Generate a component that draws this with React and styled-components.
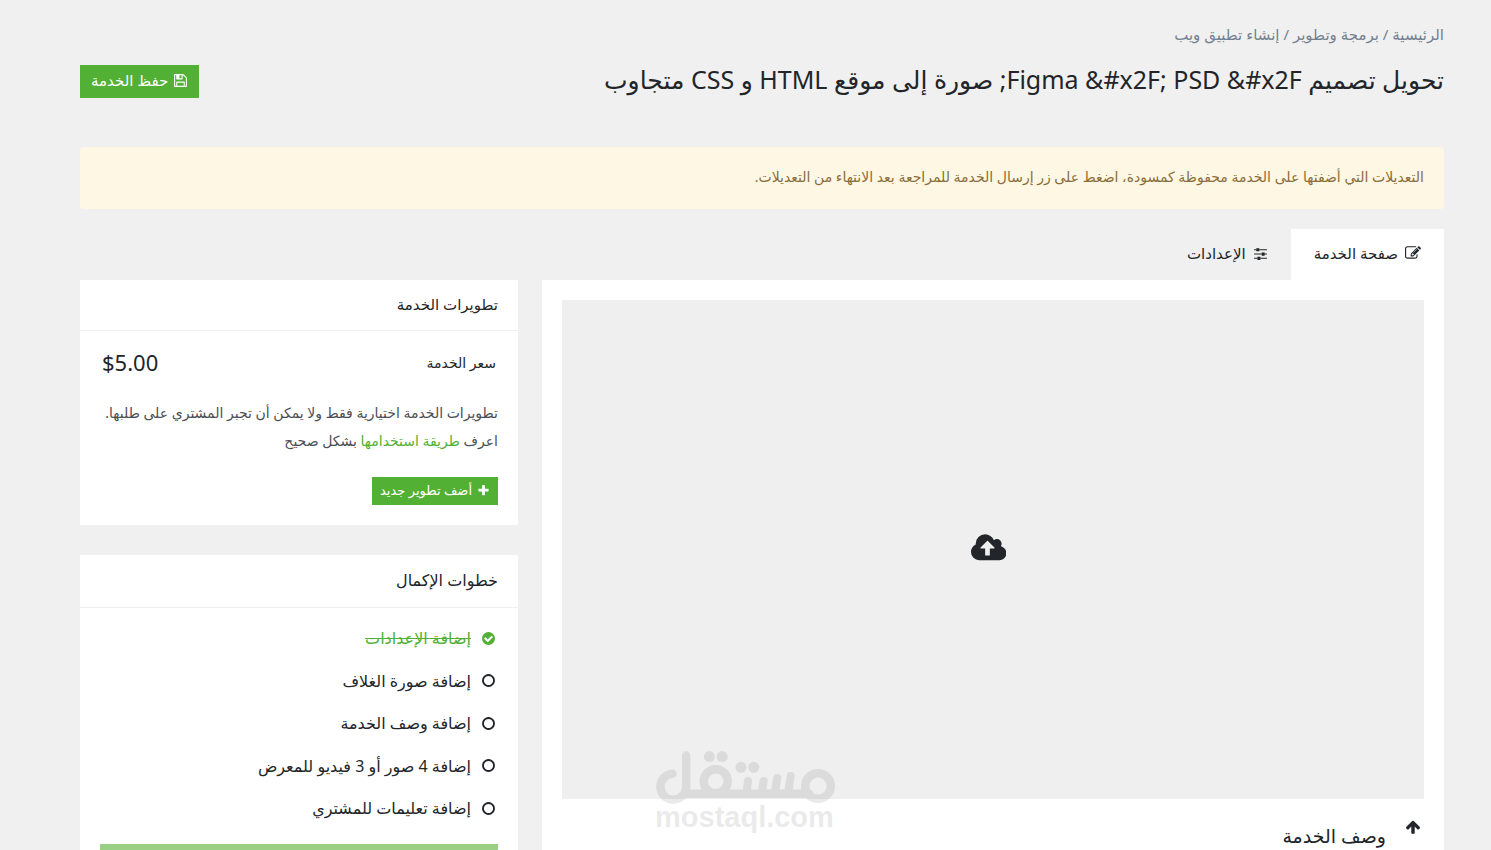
import styled, {createGlobalStyle} from "styled-components";

const icons = {
    save: "M512 1536h768v-384h-768v384zm896 0h128v-896q0-14-10-38.5t-20-34.5l-281-281q-10-10-34-20t-39-10v416q0 40-28 68t-68 28h-576q-40 0-68-28t-28-68v-416h-128v1280h128v-416q0-40 28-68t68-28h832q40 0 68 28t28 68v416zm-384-928v-320q0-13-9.5-22.5t-22.5-9.5h-192q-13 0-22.5 9.5t-9.5 22.5v320q0 13 9.5 22.5t22.5 9.5h192q13 0 22.5-9.5t9.5-22.5zm640 32v928q0 40-28 68t-68 28h-1344q-40 0-68-28t-28-68v-1344q0-40 28-68t68-28h928q40 0 88 20t76 48l280 280q28 28 48 76t20 88z",
    edit: "M888 1184l116-116-152-152-116 116v56h96v96h56zm440-720q-16-16-33 1l-350 350q-17 17-1 33t33-1l350-350q17-17 1-33zm80 594v190q0 119-84.5 203.5t-203.5 84.5h-832q-119 0-203.5-84.5t-84.5-203.5v-832q0-119 84.5-203.5t203.5-84.5h832q63 0 117 25 15 7 18 23 3 17-9 29l-49 49q-14 14-32 8-23-6-45-6h-832q-66 0-113 47t-47 113v832q0 66 47 113t113 47h832q66 0 113-47t47-113v-126q0-13 9-22l64-64q15-15 35-7t20 29zm-96-738l288 288-672 672h-288v-288zm444 132l-92 92-288-288 92-92q28-28 68-28t68 28l152 152q28 28 28 68t-28 68z",
    sliders: "M480 1408v128h-352v-128h352zm352-128q26 0 45 19t19 45v256q0 26-19 45t-45 19h-256q-26 0-45-19t-19-45v-256q0-26 19-45t45-19h256zm160-384v128h-864v-128h864zm-640-512v128h-224v-128h224zm1312 1024v128h-736v-128h736zm-960-1152q26 0 45 19t19 45v256q0 26-19 45t-45 19h-256q-26 0-45-19t-19-45v-256q0-26 19-45t45-19h256zm640 512q26 0 45 19t19 45v256q0 26-19 45t-45 19h-256q-26 0-45-19t-19-45v-256q0-26 19-45t45-19h256zm320 128v128h-224v-128h224zm0-512v128h-864v-128h864z",
    plus: "M1600 736v192q0 40-28 68t-68 28h-416v416q0 40-28 68t-68 28h-192q-40 0-68-28t-28-68v-416h-416q-40 0-68-28t-28-68v-192q0-40 28-68t68-28h416v-416q0-40 28-68t68-28h192q40 0 68 28t28 68v416h416q40 0 68 28t28 68z",
    check: "M1412 734q0-28-18-46l-91-90q-19-19-45-19t-45 19l-408 407-226-226q-19-19-45-19t-45 19l-91 90q-18 18-18 46 0 27 18 45l362 362q19 19 45 19 27 0 46-19l543-543q18-18 18-45zm252 162q0 209-103 385.5t-279.5 279.5-385.5 103-385.5-103-279.5-279.5-103-385.5 103-385.5 279.5-279.5 385.5-103 385.5 103 279.5 279.5 103 385.5z",
    circle: "M896 352q-148 0-273 73t-198 198-73 273 73 273 198 198 273 73 273-73 198-198 73-273-73-273-198-198-273-73zm768 544q0 209-103 385.5t-279.5 279.5-385.5 103-385.5-103-279.5-279.5-103-385.5 103-385.5 279.5-279.5 385.5-103 385.5 103 279.5 279.5 103 385.5z",
    arrowUp: "M1675 971q0 51-37 90l-75 75q-38 38-91 38-54 0-90-38l-294-293v704q0 52-37.5 84.5t-90.5 32.5h-128q-53 0-90.5-32.5t-37.5-84.5v-704l-294 293q-36 38-90 38t-90-38l-75-75q-38-38-38-90 0-53 38-91l651-651q35-37 90-37 54 0 91 37l651 651q37 39 37 91z",
    cloud: "M1280 864q0-14-9-23l-352-352q-9-9-23-9t-23 9l-351 351q-10 12-10 24 0 14 9 23t23 9h224v352q0 13 9.5 22.5t22.5 9.5h192q13 0 22.5-9.5t9.5-22.5v-352h224q13 0 22.5-9.5t9.5-22.5zm640 288q0 159-112.5 271.5t-271.5 112.5h-1088q-185 0-316.5-131.5t-131.5-316.5q0-130 70-240t188-165q-2-30-2-43 0-212 150-362t362-150q156 0 285.5 87t188.5 231q71-62 166-62 106 0 181 75t75 181q0 76-41 138 130 31 213.5 135.5t83.5 238.5z",
}

const steps = [
    {text: "إضافة الإعدادات", done: true},
    {text: "إضافة صورة الغلاف"},
    {text: "إضافة وصف الخدمة"},
    {text: "إضافة 4 صور أو 3 فيديو للمعرض"},
    {text: "إضافة تعليمات للمشتري"},
]

function Icon({name, size = 16, width = 1792}) {
    return (
        <IconSvg viewBox={`0 0 ${width} 1792`} $size={size} aria-hidden="true">
            <path d={icons[name]} />
        </IconSvg>
    )
}

function Logo() {
    return (
        <svg width="180" height="54" viewBox="0 0 180 54" fill="none" stroke="currentColor" strokeLinecap="round" aria-hidden="true">
            <path strokeWidth="8.4" d="M17.5 23.8A12.9 12.9 0 1 0 31.2 36V5.4M31 43.8H154" />
            <circle cx="60.7" cy="31.3" r="12" strokeWidth="8.4" />
            <circle cx="163" cy="36" r="12.8" strokeWidth="8.4" />
            <path strokeWidth="8" d="M93 31l-1.5 12M108.7 31l-2 12M122.3 28l-2.5 15M135.7 26l-2.5 17" />
            <g fill="currentColor" stroke="none">
                <circle cx="54.3" cy="6.6" r="5.5" />
                <circle cx="67.2" cy="6.6" r="5.5" />
                <circle cx="86" cy="17.3" r="5.5" />
                <circle cx="98.8" cy="17.3" r="5.5" />
            </g>
        </svg>
    )
}

export default function App() {
    return (
        <Page dir="rtl" lang="ar">
            <GlobalStyle />

            <Breadcrumb aria-label="المسار">
                <a href="#home">الرئيسية</a> / <a href="#dev">برمجة وتطوير</a> / <a href="#web">إنشاء تطبيق ويب</a>
            </Breadcrumb>

            <TitleRow>
                <h1>{"تحويل تصميم Figma &#x2F; PSD &#x2F; صورة إلى موقع HTML و CSS متجاوب"}</h1>
                <Button><Icon name="save" size={15} /> حفظ الخدمة</Button>
            </TitleRow>

            <Alert role="alert">
                التعديلات التي أضفتها على الخدمة محفوظة كمسودة، اضغط على زر إرسال الخدمة للمراجعة بعد الانتهاء من التعديلات.
            </Alert>

            <Tabs role="tablist">
                <Tab role="tab" aria-selected="true" $active><Icon name="edit" /> صفحة الخدمة</Tab>
                <Tab role="tab" aria-selected="false"><Icon name="sliders" size={15} /> الإعدادات</Tab>
            </Tabs>

            <Columns>
                <Main>
                    <Cover aria-label="رفع صورة الغلاف">
                        <Icon name="cloud" size={33} width={1920} />
                    </Cover>
                    <Section>
                        <IconButton aria-label="إخفاء"><Icon name="arrowUp" /></IconButton>
                        <h2>وصف الخدمة</h2>
                    </Section>
                    <Watermark>
                        <Logo />
                        <span>mostaql.com</span>
                    </Watermark>
                </Main>

                <Sidebar>
                    <Card>
                        <CardTitle>تطويرات الخدمة</CardTitle>
                        <CardBody>
                            <PriceRow>
                                <span>سعر الخدمة</span>
                                <Price dir="ltr">$5.00</Price>
                            </PriceRow>
                            <Hint>
                                تطويرات الخدمة اختيارية فقط ولا يمكن أن تجبر المشتري على طلبها. اعرف <a href="#help">طريقة استخدامها</a> بشكل صحيح
                            </Hint>
                            <Button $small><Icon name="plus" size={13} /> أضف تطوير جديد</Button>
                        </CardBody>
                    </Card>

                    <Card>
                        <CardTitle $large>خطوات الإكمال</CardTitle>
                        <Steps>
                            { steps.map((step) => (
                                <Step key={step.text} $done={step.done}>
                                    <Icon name={step.done ? "check" : "circle"} size={15} />
                                    <span>{step.text}</span>
                                </Step>
                            )) }
                        </Steps>
                        <SubmitButton disabled aria-label="إرسال للمراجعة" />
                    </Card>
                </Sidebar>
            </Columns>
        </Page>
    )
}

const GlobalStyle = createGlobalStyle`
    * {
        box-sizing: border-box;
    }

    body {
        margin: 0;
        background: #f0f0f0;
        color: #222529;
        font-family: "Noto Sans", "DejaVu Sans", sans-serif;
        font-size: 14px;
    }

    h1, h2, p, ul {
        margin: 0;
        padding: 0;
        font-weight: 400;
    }

    a {
        color: inherit;
        text-decoration: none;
    }

    button {
        font: inherit;
        color: inherit;
        border: none;
        background: none;
        padding: 0;
        cursor: pointer;
    }
`

const Page = styled.div`
    height: 100vh;
    overflow: hidden;
    padding: 23px 47px 0 80px;
`

const IconSvg = styled.svg`
    height: ${({$size}) => $size}px;
    fill: currentColor;
    flex-shrink: 0;
`

const Breadcrumb = styled.nav`
    color: #74808f;
    font-size: 15px;
    line-height: 22px;
`

const TitleRow = styled.header`
    display: flex;
    justify-content: space-between;
    align-items: center;
    height: 72px;

    h1 {
        padding-bottom: 4px;
        font-size: 25px;
        line-height: 40px;
    }
`

const Button = styled.button`
    display: inline-flex;
    align-items: center;
    gap: 5px;
    height: ${({$small}) => $small ? 28 : 33}px;
    padding: 0 ${({$small}) => $small ? 8 : 11}px 2px;
    background: #52b035;
    color: white;
    font-size: ${({$small}) => $small ? 13 : 15}px;
    white-space: nowrap;
`

const Alert = styled.div`
    margin-top: 30px;
    padding: 15px 20px 17px;
    background: #fdf7e4;
    color: #8a6d3b;
    border-radius: 4px;
    font-size: 14px;
    line-height: 30px;
`

const Tabs = styled.div`
    display: flex;
    margin-top: 20px;
`

const Tab = styled.button`
    display: flex;
    align-items: center;
    gap: 7px;
    height: 51px;
    padding: 0 23px 3px;
    font-size: 15px;
    background: ${({$active}) => $active ? "white" : "transparent"};
`

const Columns = styled.div`
    display: grid;
    grid-template-columns: minmax(0, 902fr) minmax(0, 438fr);
    align-items: start;
    gap: 24px;
`

const Main = styled.main`
    position: relative;
    background: white;
    padding: 20px;
`

const Cover = styled.button`
    display: flex;
    align-items: center;
    justify-content: center;
    width: 100%;
    height: 499px;
    padding: 0 9px 3px 0;
    background: #efefef;
`

const Section = styled.section`
    display: flex;
    gap: 19px;
    padding: 20px 3px 0;

    h2 {
        font-size: 19px;
        line-height: 34px;
    }
`

const IconButton = styled.button`
    display: flex;
    align-self: flex-start;
`

const Watermark = styled.div`
    position: absolute;
    left: 113px;
    top: 470px;
    display: flex;
    flex-direction: column;
    direction: ltr;
    color: black;
    opacity: .08;
    pointer-events: none;

    span {
        font-family: "Liberation Sans", sans-serif;
        font-size: 29px;
        font-weight: 700;
        line-height: 26px;
    }
`

const Sidebar = styled.aside`
    display: flex;
    flex-direction: column;
    gap: 30px;
`

const Card = styled.section`
    background: white;
`

const CardTitle = styled.h2`
    padding: 0 20px 2px;
    font-size: ${({$large}) => $large ? 16 : 15}px;
    line-height: ${({$large}) => $large ? 50 : 48}px;
    border-bottom: 1px solid #f0f0f0;
`

const CardBody = styled.div`
    padding: 11px 20px 20px;
`

const PriceRow = styled.div`
    display: flex;
    justify-content: space-between;
    align-items: center;
    height: 40px;
    padding: 0 2px;
`

const Price = styled.span`
    font-size: 22px;
`

const Hint = styled.p`
    margin: 17px 0 22px;
    color: #4b4f54;
    font-size: 14px;
    line-height: 28px;

    a {
        color: #52b035;
    }
`

const Steps = styled.ul`
    display: flex;
    flex-direction: column;
    justify-content: space-between;
    min-height: 236px;
    padding: 15px 22px 21px;
    list-style: none;
`

const Step = styled.li`
    display: flex;
    align-items: center;
    gap: 10px;
    font-size: 16px;
    line-height: 30px;
    color: ${({$done}) => $done ? "#52b035" : "inherit"};

    span {
        text-decoration: ${({$done}) => $done ? "line-through" : "none"};
    }
`

const SubmitButton = styled.button`
    display: block;
    width: calc(100% - 40px);
    height: 40px;
    margin: 0 20px 20px;
    background: #99d086;
`
